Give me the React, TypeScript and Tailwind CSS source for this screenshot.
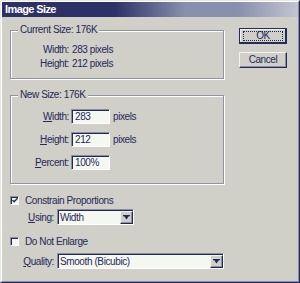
import React from "react";

const NAVY = "#25285a";

function Check({ checked }: { checked?: boolean }) {
  return (
    <div className="flex h-[9px] w-[9px] items-center justify-center border border-t-[#8a8ea4] border-l-[#8a8ea4] border-r-white border-b-white bg-[#f5f8f0] shadow-[inset_1px_1px_0_#25285a]">
      {checked && (
        <svg width="7" height="7" viewBox="0 0 7 7" className="ml-[1px] mt-[1px]">
          <path d="M0.5 3 L2.5 5 L6.5 0.8" stroke={NAVY} strokeWidth="1.6" fill="none" />
        </svg>
      )}
    </div>
  );
}

function Select({ widthClass, value }: { widthClass: string; value: string }) {
  return (
    <div
      className={`flex h-[16px] ${widthClass} border border-t-[#8a8ea4] border-l-[#8a8ea4] border-r-white border-b-white bg-[#f5f8f0] shadow-[inset_1px_1px_0_#25285a]`}
    >
      <div className="flex flex-1 items-center pl-[2px] pt-[1px] leading-[12px]">{value}</div>
      <div className="mt-[1px] flex h-[13px] w-[13px] items-center justify-center border border-t-[#f2f2ee] border-l-[#f2f2ee] border-r-[#25285a] border-b-[#25285a] bg-[#d0cfc8] shadow-[inset_-1px_-1px_0_#8a8ea4]">
        <svg width="7" height="5" viewBox="0 0 7 5">
          <path d="M0 0h7v1.2H0z M1.2 1.2h4.6L3.5 4.5z" fill={NAVY} />
        </svg>
      </div>
    </div>
  );
}

function Input({ value }: { value: string }) {
  return (
    <div className="flex h-[15px] w-[39px] items-center border border-t-[#8a8ea4] border-l-[#8a8ea4] border-r-white border-b-white bg-[#f5f8f0] pl-[3px] pt-[1px] leading-[12px] shadow-[inset_1px_1px_0_#25285a]">
      {value}
    </div>
  );
}

export default function App() {
  return (
    <div className="h-[283px] w-[300px] border border-t-[#e8e7e1] border-l-[#e8e7e1] border-r-[#25285a] border-b-[#25285a] bg-[#d0cfc8] font-['Liberation_Sans',Arial,sans-serif] text-[10px] tracking-[-0.4px] text-[#25285a]">
      <div className="flex h-full w-full flex-col border border-t-white border-l-white border-r-[#8a8ea4] border-b-[#8a8ea4]">
        {/* Title bar */}
        <div className="flex h-[15px] items-center bg-[linear-gradient(to_right,#2e3166_0%,#2e3166_38%,#8990ae_62%,#8990ae_80%,#c2c5d0_100%)] pl-[3px] text-[11px] font-bold tracking-[-0.6px] text-white">
          Image Size
        </div>

        <div className="flex pl-[8px]">
          {/* Left column */}
          <div className="flex w-[214px] flex-col">
            {/* Current Size */}
            <div className="relative mt-[13px] h-[49px] w-[214px] border border-[#8e93a6] pt-[11px] shadow-[1px_1px_0_#fff,inset_1px_1px_0_#fff]">
              <span className="absolute -top-[7px] left-[7px] bg-[#d0cfc8] px-[2px] leading-[12px]">
                Current Size: 176K
              </span>
              <div className="flex h-[14px] items-center">
                <span className="w-[58px] text-right">Width:</span>
                <span className="ml-[3px]">283 pixels</span>
              </div>
              <div className="flex h-[14px] items-center">
                <span className="w-[58px] text-right">Height:</span>
                <span className="ml-[3px]">212 pixels</span>
              </div>
            </div>

            {/* New Size */}
            <div className="relative mt-[16px] flex h-[89px] w-[214px] flex-col gap-[8px] border border-[#8e93a6] pt-[13px] shadow-[1px_1px_0_#fff,inset_1px_1px_0_#fff]">
              <span className="absolute -top-[7px] left-[7px] bg-[#d0cfc8] px-[2px] leading-[12px]">
                New Size: 176K
              </span>
              <div className="flex h-[15px] items-center">
                <span className="w-[58px] text-right">
                  <span className="underline underline-offset-[1px]">W</span>idth:
                </span>
                <div className="ml-[2px]">
                  <Input value="283" />
                </div>
                <span className="ml-[3px]">pixels</span>
              </div>
              <div className="flex h-[15px] items-center">
                <span className="w-[58px] text-right">
                  <span className="underline underline-offset-[1px]">H</span>eight:
                </span>
                <div className="ml-[2px]">
                  <Input value="212" />
                </div>
                <span className="ml-[3px]">pixels</span>
              </div>
              <div className="flex h-[15px] items-center">
                <span className="w-[58px] text-right">
                  <span className="underline underline-offset-[1px]">P</span>ercent:
                </span>
                <div className="ml-[2px]">
                  <Input value="100%" />
                </div>
              </div>
            </div>

            {/* Constrain */}
            <div className="mt-[10px] flex h-[12px] items-center">
              <Check checked />
              <span className="ml-[6px]">Constrain Proportions</span>
            </div>
            <div className="mt-[3px] flex items-center">
              <span className="w-[44px] text-right">
                <span className="underline underline-offset-[1px]">U</span>sing:
              </span>
              <div className="ml-[3px]">
                <Select widthClass="w-[77px]" value="Width" />
              </div>
            </div>

            <div className="mt-[10px] flex h-[12px] items-center">
              <Check />
              <span className="ml-[6px]">Do Not Enlarge</span>
            </div>
            <div className="mt-[6px] flex items-center">
              <span className="w-[44px] text-right">
                <span className="underline underline-offset-[1px]">Q</span>uality:
              </span>
              <div className="ml-[3px]">
                <Select widthClass="w-[167px]" value="Smooth (Bicubic)" />
              </div>
            </div>
          </div>

          {/* Right column */}
          <div className="ml-[15px] flex flex-col">
            <div className="mt-[11px] flex h-[16px] w-[48px] items-center justify-center border border-[#25285a] bg-[#d0cfc8] shadow-[inset_-1px_-1px_0_#25285a,inset_1px_1px_0_#f2f2ee]">
              <div className="flex h-[10px] w-[40px] items-center justify-center border border-dotted border-[#25285a] leading-[10px]">
                OK
              </div>
            </div>
            <div className="mt-[8px] flex h-[16px] w-[48px] items-center justify-center border border-t-[#f2f2ee] border-l-[#f2f2ee] border-r-[#25285a] border-b-[#25285a] bg-[#d0cfc8] leading-[12px] shadow-[inset_-1px_-1px_0_#8a8ea4]">
              Cancel
            </div>
          </div>
        </div>
      </div>
    </div>
  );
}
